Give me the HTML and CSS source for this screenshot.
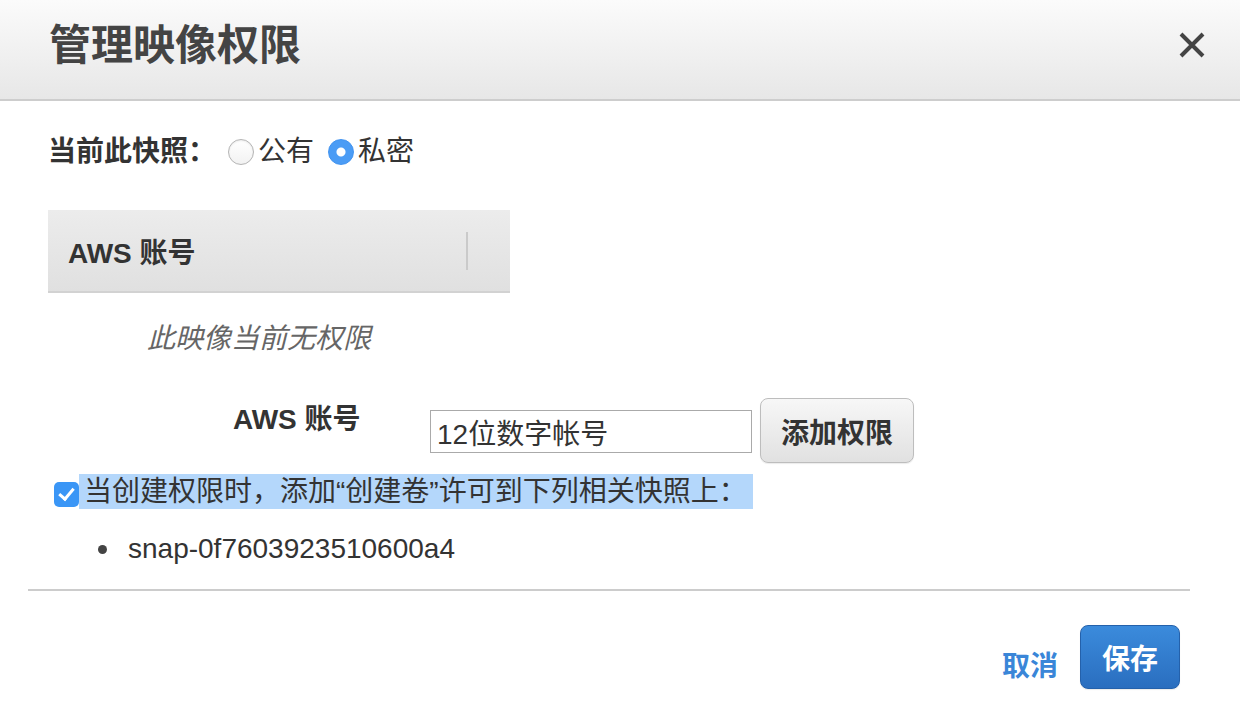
FILE: index.html
```html
<!DOCTYPE html>
<html lang="zh-CN">
<head>
    <meta charset="UTF-8">
    <title>管理映像权限</title>
    <link rel="stylesheet" href="styles.css">
</head>
<body>
    <div class="modal">
        <header class="modal-head">
            <h1 class="modal-title">管理映像权限</h1>
            <button class="close-btn" type="button" aria-label="关闭">
                <svg width="28" height="28" viewBox="0 0 28 28">
                    <path d="M3 3 L25 25 M25 3 L3 25" stroke="#444" stroke-width="4" fill="none"/>
                </svg>
            </button>
        </header>

        <div class="modal-body">
            <div class="visibility">
                <span class="field-label">当前此快照：</span>
                <label class="radio"><input type="radio" name="vis">公有</label>
                <label class="radio"><input type="radio" name="vis" checked>私密</label>
            </div>

            <div class="perm-table">
                <div class="perm-head">
                    <span>AWS 账号</span>
                    <span class="col-sep"></span>
                </div>
                <div class="perm-empty">此映像当前无权限</div>
            </div>

            <div class="add-row">
                <label class="add-label" for="account">AWS 账号</label>
                <input class="account-input" id="account" type="text" value="12位数字帐号">
                <button class="btn" type="button">添加权限</button>
            </div>

            <label class="volume-check">
                <input type="checkbox" checked>
                <span class="selected">当创建权限时，添加“创建卷”许可到下列相关快照上：</span>
            </label>

            <ul class="snap-list">
                <li>snap-0f7603923510600a4</li>
            </ul>
        </div>

        <hr class="divider">

        <footer class="modal-foot">
            <a class="cancel-link" href="#">取消</a>
            <button class="btn btn-primary" type="button">保存</button>
        </footer>
    </div>
</body>
</html>
```

FILE: styles.css
```css
body{
    margin:0;
    padding:0;
    background:#fff;
    font-family: "Liberation Sans", "Noto Sans CJK SC", sans-serif;
    font-size:28px;
    color:#333;
}
.modal{
    width:1240px;
    height:708px;
    overflow:hidden;
}
.modal-head{
    height:99px;
    border-bottom:2px solid #cdcdcd;
    background:linear-gradient(#fbfbfb, #e7e7e7);
    display:flex;
    align-items:center;
    justify-content:space-between;
    padding:0 34px 0 49px;
}
.modal-title{
    margin:0 0 8px 0;
    font-size:42px;
    font-weight:bold;
    color:#444;
    line-height:50px;
}
.close-btn{
    border:0;
    background:none;
    padding:0;
    width:28px;
    height:28px;
    margin-bottom:10px;
    cursor:pointer;
}
.close-btn svg{
    display:block;
}
.modal-body{
    padding:0 48px;
}
.visibility{
    margin-top:33px;
    height:36px;
    line-height:36px;
    display:flex;
    align-items:center;
}
.field-label{
    font-weight:bold;
    margin-right:12px;
}
.radio{
    display:flex;
    align-items:center;
    margin-right:14px;
}
.radio input{
    appearance:none;
    -webkit-appearance:none;
    width:26px;
    height:26px;
    margin:0 4px 0 0;
    border-radius:50%;
    border:1px solid #b4b4b4;
    background:linear-gradient(#fff, #f2f2f2);
    box-shadow:inset 0 1px 2px rgba(0,0,0,0.08);
}
.radio input:checked{
    border-color:#3f92f0;
    background:radial-gradient(circle, #fff 0, #fff 4px, #4b9cf5 5px);
    box-shadow:none;
}
.perm-table{
    margin-top:40px;
    width:462px;
}
.perm-head{
    height:81px;
    border-bottom:2px solid #d2d2d2;
    background:linear-gradient(#ececec, #e0e0e0);
    display:flex;
    align-items:center;
    justify-content:space-between;
    padding:0 42px 0 20px;
    font-weight:bold;
}
.col-sep{
    width:2px;
    height:38px;
    background:#cacaca;
}
.perm-empty{
    margin-top:28px;
    padding-left:99px;
    line-height:36px;
    font-style:italic;
    color:#666;
}
.add-row{
    margin-top:41px;
    display:flex;
    align-items:flex-start;
    padding-left:185px;
}
.add-label{
    width:197px;
    margin-top:4px;
    line-height:36px;
    font-weight:bold;
}
.account-input{
    box-sizing:border-box;
    width:322px;
    height:43px;
    margin-top:12px;
    padding:0 6px;
    border:1px solid #aaa;
    font-family:inherit;
    font-size:28px;
    color:#333;
}
.btn{
    box-sizing:border-box;
    height:65px;
    margin-left:8px;
    padding:0 20px;
    border:1px solid #bdbdbd;
    border-radius:8px;
    background:linear-gradient(#f7f7f7, #e1e1e1);
    font-family:inherit;
    font-size:28px;
    font-weight:bold;
    color:#333;
    box-shadow:0 1px 1px rgba(0,0,0,0.08);
    cursor:pointer;
}
.volume-check{
    margin-top:11px;
    height:35px;
    display:flex;
    align-items:center;
    padding-left:6px;
}
.volume-check input{
    appearance:none;
    -webkit-appearance:none;
    flex:none;
    width:25px;
    height:25px;
    margin:6px 0 0 0;
    border-radius:5px;
    background:#3a96f6;
    position:relative;
}
.volume-check input:checked::after{
    content:"";
    position:absolute;
    left:8px;
    top:3px;
    width:6px;
    height:12px;
    border:solid #fff;
    border-width:0 3px 3px 0;
    transform:rotate(40deg);
}
.selected{
    box-sizing:border-box;
    white-space:nowrap;
    background:#b4d7fb;
    line-height:35px;
    height:35px;
    padding:0 0 0 5px;
    min-width:674px;
}
.snap-list{
    margin:22px 0 0 0;
    padding-left:50px;
    list-style:none;
    line-height:36px;
}
.snap-list li{
    display:flex;
    align-items:center;
}
.snap-list li::before{
    content:"";
    width:9px;
    height:9px;
    border-radius:50%;
    background:#444;
    margin-right:21px;
}
.divider{
    margin:22px 50px 0 28px;
    border:0;
    height:2px;
    background:#cccccc;
}
.modal-foot{
    margin-top:34px;
    padding-right:60px;
    display:flex;
    justify-content:flex-end;
    align-items:flex-end;
}
.cancel-link{
    color:#3a86d8;
    font-weight:bold;
    text-decoration:none;
    margin-right:22px;
    line-height:36px;
    margin-bottom:4px;
}
.btn-primary{
    margin-left:0;
    height:64px;
    width:100px;
    padding:0;
    border:1px solid #2461ab;
    background:linear-gradient(#3b8bdc, #2a6ebf);
    color:#fff;
}
```
